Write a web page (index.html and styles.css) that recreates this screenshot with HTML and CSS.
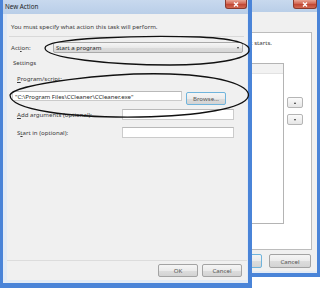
FILE: index.html
```html
<!DOCTYPE html>
<html lang="en">
<head>
    <meta charset="UTF-8">
    <meta name="viewport" content="width=device-width, initial-scale=1.0">
    <title>Task Scheduler</title>
    <link rel="stylesheet" href="styles.css">
</head>
<body>
    <div class="desktop">
        <!-- Task properties window, behind -->
        <div class="window back">
            <div class="titlebar">
                <span class="close">
                    <svg width="6" height="5" viewBox="0 0 6 5"><path d="M1 0.5 L5 4.5 M5 0.5 L1 4.5" stroke="#fff" stroke-width="1.4"/></svg>
                </span>
            </div>
            <div class="client">
                <div class="panel">
                    <div class="intro"><span>when your task starts.</span></div>
                    <div class="list-row">
                        <div class="list"><div class="list-head"></div></div>
                        <div class="order">
                            <span class="mini"><span class="arrow up"></span></span>
                            <span class="mini"><span class="arrow down"></span></span>
                        </div>
                    </div>
                </div>
                <div class="footer back-footer">
                    <span class="btn focused">OK</span>
                    <span class="btn">Cancel</span>
                </div>
            </div>
        </div>

        <!-- New Action dialog, in front -->
        <div class="window front">
            <div class="titlebar">
                <span class="close">
                    <svg width="6" height="5" viewBox="0 0 6 5"><path d="M1 0.5 L5 4.5 M5 0.5 L1 4.5" stroke="#fff" stroke-width="1.4"/></svg>
                </span>
                New Action
            </div>
            <div class="client">
                <p class="instr">You must specify what action this task will perform.</p>
                <div class="sep"></div>
                <div class="action-row">
                    <span class="action-label">Act<u>i</u>on:</span>
                    <span class="combo"><span>Start a program</span><span class="arrow down"></span></span>
                </div>
                <p class="group-title">Settings</p>
                <p class="field-label"><u>P</u>rogram/script:</p>
                <div class="path-row">
                    <span class="input path">"C:\Program Files\CCleaner\CCleaner.exe"</span>
                    <span class="btn focused browse">Browse...</span>
                </div>
                <div class="opt-row">
                    <span class="opt-label"><u>A</u>dd arguments (optional):</span>
                    <span class="input opt"></span>
                </div>
                <div class="opt-row start">
                    <span class="opt-label">S<u>t</u>art in (optional):</span>
                    <span class="input opt"></span>
                </div>
                <div class="footer">
                    <span class="btn">OK</span>
                    <span class="btn">Cancel</span>
                </div>
            </div>
        </div>

        <!-- hand drawn marks over the screenshot -->
        <svg class="marks" width="320" height="288" viewBox="0 0 320 288">
            <path d="M45 48 C45 38, 140 35, 200 37 C240 39, 251 45, 249 51 C247 59, 215 65, 170 65 C110 65, 45 58, 45 48 Z" />
            <path d="M10 95 C14 84, 110 72, 170 74 C230 76, 252 88, 248 97 C244 108, 200 116, 140 117 C70 118, 10 110, 10 95 Z" />
        </svg>
    </div>
</body>
</html>
```

FILE: styles.css
```css
body {
    margin: 0;
    background: #ffffff;
    font-family: "Noto Sans", "Open Sans", sans-serif;
    font-size: 6.1px;
    color: #3a3a3a;
}

p {
    margin: 0;
}

u {
    text-decoration-thickness: 0.5px;
}

.desktop {
    position: relative;
    width: 320px;
    height: 288px;
    overflow: hidden;
}

.window {
    position: absolute;
    top: 0;
    box-sizing: border-box;
    display: flex;
    flex-direction: column;
    background: #e3ebf5;
    border: solid #4a84d8;
}

.front {
    left: 0;
    width: 252px;
    height: 288px;
    border-width: 0 4px 5px 3px;
}

.back {
    left: 40px;
    width: 280px;
    height: 277px;
    border-width: 0 3px 4px 0;
}

.titlebar {
    flex: none;
    height: 14px;
    padding-left: 2px;
    font-size: 6.3px;
    line-height: 14px;
    color: #1e1e1e;
    background: linear-gradient(#c8d9ee, #b9cee8);
}

.back .titlebar {
    height: 12px;
}

.close {
    float: right;
    margin-right: 1px;
    width: 22px;
    height: 9px;
    box-sizing: border-box;
    display: flex;
    align-items: center;
    justify-content: center;
    border: 1px solid #8a3a2e;
    border-top: none;
    border-radius: 0 0 3px 3px;
    background: linear-gradient(#e9a595, #d0604c 50%, #c04432 51%, #d26a52);
}

.back .close {
    width: 24px;
    margin-right: 0;
}

.client {
    flex: 1;
    display: flex;
    flex-direction: column;
    background: #f0f0f0;
    margin: 0 1px 3px 4px;
}

.back .client {
    margin: 0 0 2px 0;
}

/* front dialog */
.instr {
    margin: 8px 0 0 4px;
    line-height: 10px;
}

.sep {
    margin: 4px 3px 0 2px;
    border-top: 1px solid #d9d9d9;
}

.action-row {
    display: flex;
    align-items: center;
    height: 11px;
    margin-top: 5px;
    padding-left: 4px;
}

.action-label {
    width: 42px;
}

.combo {
    width: 190px;
    height: 11px;
    box-sizing: border-box;
    display: flex;
    align-items: center;
    padding-left: 2px;
    border: 1px solid #a9a9a9;
    border-radius: 2px;
    background: linear-gradient(#f6f6f6, #e9e9e9 50%, #dcdcdc 51%, #d6d6d6);
    color: #2a2a2a;
}

.combo .arrow {
    margin-left: auto;
    margin-right: 3px;
}

.group-title {
    margin: 5px 0 0 6px;
    line-height: 10px;
}

.field-label {
    margin: 6px 0 0 10px;
    line-height: 10px;
}

.path-row {
    display: flex;
    align-items: flex-start;
    gap: 4px;
    margin-top: 7px;
    padding-left: 5px;
}

.input {
    box-sizing: border-box;
    display: flex;
    align-items: center;
    background: #ffffff;
    border: 1px solid #cbcbcb;
    border-top-color: #b9b9b9;
}

.path {
    width: 170px;
    height: 10px;
    padding-left: 2px;
    color: #2a2a2a;
}

.browse {
    width: 47px;
    margin-top: 1px;
}

.opt-row {
    display: flex;
    align-items: center;
    height: 11px;
    margin-top: 4px;
    padding-left: 10px;
}

.opt-row.start {
    margin-top: 7px;
}

.opt-label {
    width: 105px;
}

.opt {
    width: 112px;
    height: 11px;
}

.footer {
    margin-top: auto;
    display: flex;
    justify-content: flex-end;
    gap: 4px;
    padding: 3px 5px 3px 0;
    border-top: 1px solid #dcdcdc;
}

.btn {
    width: 40px;
    height: 13px;
    box-sizing: border-box;
    display: flex;
    align-items: center;
    justify-content: center;
    border: 1px solid #a3a3a3;
    border-radius: 2px;
    background: linear-gradient(#f5f5f5, #ebebeb 50%, #dddddd 51%, #d3d3d3);
    color: #555555;
}

.btn.focused {
    border-color: #6fb4dc;
}

/* back window */
.panel {
    height: 218px;
    box-sizing: border-box;
    margin: 20px 5px 0 0;
    padding-top: 5px;
    background: #ffffff;
    border: 1px solid #bcbcbc;
}

.intro {
    display: flex;
    justify-content: flex-end;
    margin-right: 39px;
    line-height: 10px;
    white-space: nowrap;
}

.list-row {
    display: flex;
    justify-content: flex-end;
    gap: 3px;
    margin-top: 15px;
    padding-right: 8px;
}

.list {
    width: 180px;
    height: 161px;
    box-sizing: border-box;
    border: 1px solid #b4b4b4;
}

.list-head {
    height: 9px;
    background: #f2f2f2;
    border-bottom: 1px solid #e2e2e2;
}

.order {
    display: flex;
    flex-direction: column;
    gap: 6px;
    padding-top: 34px;
}

.mini {
    width: 16px;
    height: 11px;
    box-sizing: border-box;
    display: flex;
    align-items: center;
    justify-content: center;
    border: 1px solid #b5b5b5;
    border-radius: 2px;
    background: linear-gradient(#fbfbfb, #e6e6e6);
}

.arrow {
    width: 0;
    height: 0;
    border-left: 1.5px solid transparent;
    border-right: 1.5px solid transparent;
}

.arrow.up {
    border-bottom: 2px solid #333333;
}

.arrow.down {
    border-top: 2px solid #333333;
}

.back-footer {
    margin-top: 4px;
    gap: 7px;
    padding: 0 6px 0 0;
    border-top: none;
}

.back-footer .btn {
    width: 42px;
    height: 14px;
}

.marks {
    position: absolute;
    top: 0;
    left: 0;
    pointer-events: none;
}

.marks path {
    fill: none;
    stroke: #111111;
    stroke-width: 1.3;
}
```
